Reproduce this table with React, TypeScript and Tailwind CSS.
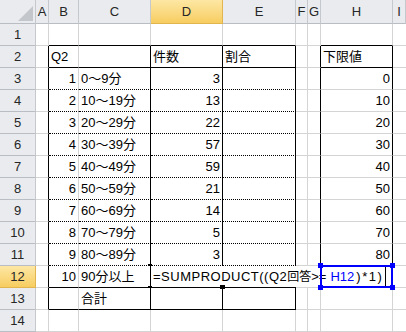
import React from 'react';

const COLS = ['A', 'B', 'C', 'D', 'E', 'F', 'G', 'H', 'I'];
const ROWS = Array.from({ length: 14 }, (_, i) => i + 1);

const counts = [3, 13, 22, 57, 59, 21, 14, 5, 3];

// text of each cell, keyed "col:row"
const cells: Record<string, { text: string; align: 'left' | 'right' }> = {
  'B:2': { text: 'Q2', align: 'left' },
  'D:2': { text: '件数', align: 'left' },
  'E:2': { text: '割合', align: 'left' },
  'H:2': { text: '下限値', align: 'left' },
  'B:12': { text: '10', align: 'right' },
  'C:12': { text: '90分以上', align: 'left' },
  'C:13': { text: '合計', align: 'left' },
};
counts.forEach((n, i) => {
  const row = i + 3;
  cells[`B:${row}`] = { text: String(i + 1), align: 'right' };
  cells[`C:${row}`] = { text: `${i * 10}～${i * 10 + 9}分`, align: 'left' };
  cells[`D:${row}`] = { text: String(n), align: 'right' };
  cells[`H:${row}`] = { text: String(i * 10), align: 'right' };
});

const rightBorder = (ci: number, row: number) => {
  if (ci === 8) return 'border-r-0';
  const table = [0, 2, 3, 4].includes(ci) && row >= 2 && row <= 13;
  const lower = [6, 7].includes(ci) && row >= 2 && row <= 11;
  return table || lower ? 'border-r-black' : 'border-r-[#d4d4d4]';
};

const bottomBorder = (ci: number, row: number) => {
  if (ci >= 1 && ci <= 4) {
    if (row === 1 || row === 2 || row === 12 || row === 13) return 'border-b-black';
    if (row >= 3 && row <= 11) return 'border-b-black [border-bottom-style:dotted]';
  }
  if (ci === 7 && (row === 1 || row === 2 || row === 11)) return 'border-b-black';
  return 'border-b-[#d4d4d4]';
};

const headerBase =
  'flex items-center justify-center border-r border-b text-[13px] text-[#262626]';
const headerIdle = 'bg-[#e9ebee] border-r-[#c5c9ce] border-b-[#b9bec5]';
const headerActive =
  'bg-gradient-to-b from-[#fde7a3] to-[#f7cd5f] border-r-[#e3b54f] border-b-[#e3b54f]';

export default function App() {
  return (
    <div
      className="relative h-[332px] w-[406px] overflow-hidden bg-white text-black"
      style={{ fontFamily: '"Liberation Sans", "Noto Sans CJK JP", sans-serif' }}
    >
      <div className="grid grid-cols-[36px_13px_30px_72px_72px_73px_12px_13px_72px_13px] grid-rows-[24px_repeat(14,22px)]">
        {/* select-all corner */}
        <div className="flex items-end justify-end border-r border-b border-r-[#c5c9ce] border-b-[#b9bec5] bg-[#e9ebee] pr-[2px] pb-[2px]">
          <svg width="15" height="15" viewBox="0 0 15 15">
            <polygon points="15,0 15,15 0,15" fill="#c3c6ca" />
          </svg>
        </div>
        {COLS.map((c) => (
          <div key={c} className={`${headerBase} ${c === 'D' ? headerActive : headerIdle}`}>
            {c}
          </div>
        ))}

        {ROWS.map((row) => (
          <React.Fragment key={row}>
            <div className={`${headerBase} ${row === 12 ? headerActive : headerIdle}`}>{row}</div>
            {COLS.map((c, ci) => {
              const cell = cells[`${c}:${row}`];
              return (
                <div
                  key={c}
                  className={`flex items-center overflow-visible whitespace-nowrap border-r border-b text-[13px] ${rightBorder(ci, row)} ${bottomBorder(ci, row)} ${
                    cell?.align === 'right' ? 'justify-end pr-[2px]' : 'justify-start pl-[2px]'
                  }`}
                >
                  {cell?.text}
                </div>
              );
            })}
          </React.Fragment>
        ))}
      </div>

      {/* in-cell editor on D12, caret on its right edge */}
      <div className="absolute left-[151px] top-[266px] flex h-[21px] w-[235px] items-center whitespace-nowrap border-r border-black bg-white pl-[2px] text-[13px]">
        <span className="tracking-[0.5px]">=SUMPRODUCT((Q2</span>
        <span className="text-[12px]">回答</span>
        <span>&gt;=</span>
        <span className="ml-[4px] text-[#0000ff]">H12</span>
        <span className="ml-[2px] tracking-[1.5px]">)*1)</span>
      </div>

      {/* active cell corners + range finder around H12 */}
      <svg className="pointer-events-none absolute left-[146px] top-[261px]" width="252" height="32" viewBox="0 0 252 32">
        <rect x="2" y="3" width="4" height="2" fill="#000" />
        <rect x="2" y="25" width="4" height="2" fill="#000" />
        <rect x="74" y="24" width="5" height="4" fill="#000" />
        <rect x="175" y="5" width="71" height="21" fill="none" stroke="#0000ff" strokeWidth="2" />
        <rect x="172" y="2" width="5" height="5" fill="#0000ff" />
        <rect x="244" y="2" width="5" height="5" fill="#0000ff" />
        <rect x="172" y="24" width="5" height="5" fill="#0000ff" />
        <rect x="244" y="24" width="5" height="5" fill="#0000ff" />
      </svg>
    </div>
  );
}
